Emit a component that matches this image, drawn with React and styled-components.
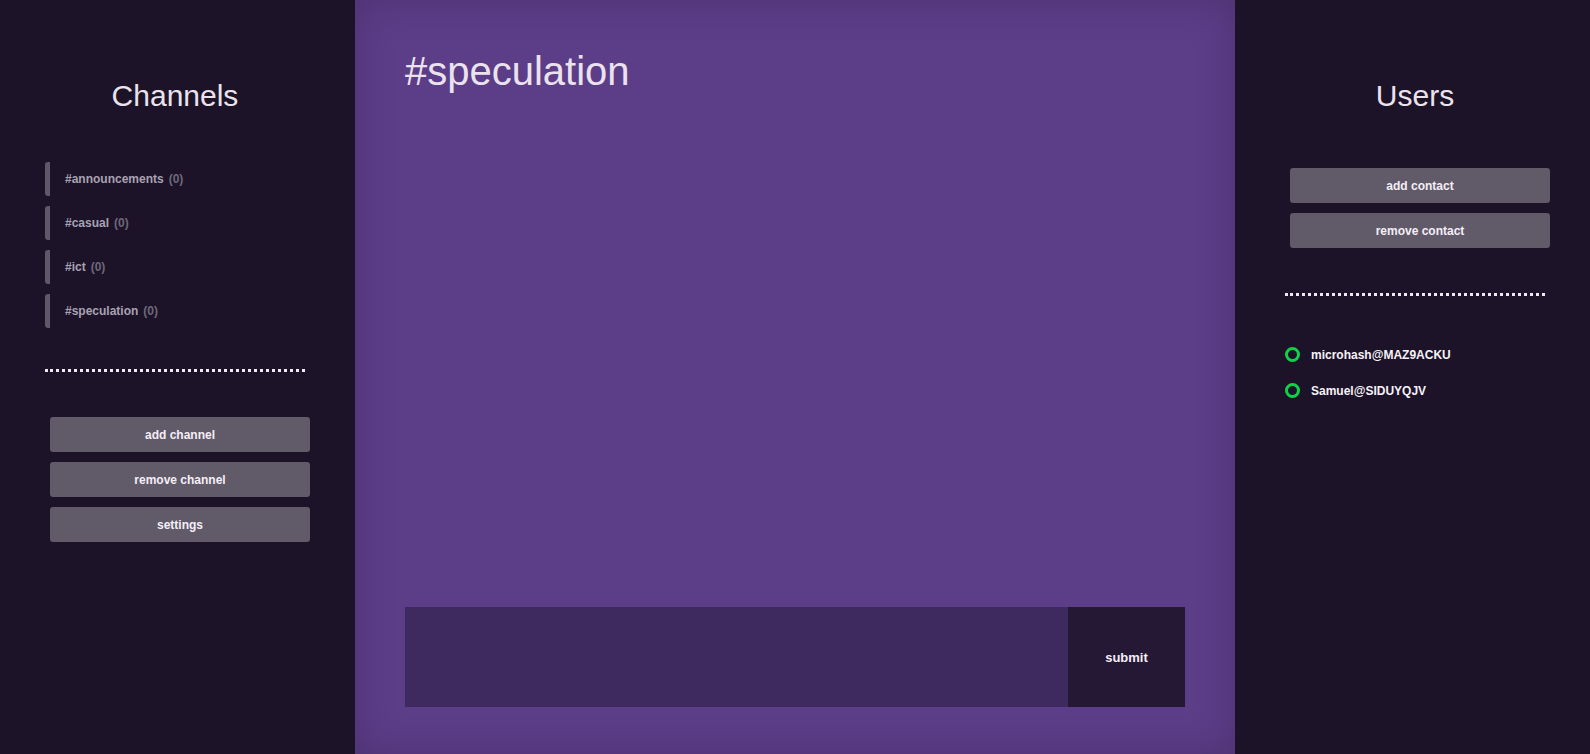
import styled, { createGlobalStyle } from 'styled-components';

const Global = createGlobalStyle`
  html, body {
    margin: 0;
    padding: 0;
    height: 100%;
    background: #1c1328;
  }
  #root { height: 100%; }
  * { box-sizing: border-box; }
`

const Layout = styled.div`
  display: grid;
  grid-template-columns: 355px 1fr 355px;
  height: 754px;
  font-family: 'Liberation Sans', Arial, sans-serif;
`

const Side = styled.aside`
  background: #1c1328;
  display: flex;
  flex-direction: column;
  padding: ${p => p.$right ? '0 45px 0 50px' : '0 50px 0 45px'};
`

const Heading = styled.h2`
  margin: 78px 0 0;
  font-size: 30px;
  font-weight: 400;
  line-height: 36px;
  color: #ebe3ec;
  text-align: center;
`

const ChannelList = styled.ul`
  list-style: none;
  margin: 48px 0 0;
  padding: 0;
  display: flex;
  flex-direction: column;
  gap: 10px;
`

const Channel = styled.li`
  height: 34px;
  display: flex;
  align-items: center;
  gap: 5px;
  padding-left: 15px;
  border-left: 5px solid #5f5868;
  border-radius: 3px;
  font-size: 12px;
  font-weight: 700;
  color: #a8a2b3;
  span { color: #6e687a; }
`

const Divider = styled.hr`
  border: 0;
  border-top: 3px dotted #f0eaf2;
  margin: ${p => p.$m};
  width: 260px;
`

const Buttons = styled.div`
  display: flex;
  flex-direction: column;
  gap: 10px;
  margin: ${p => p.$m};
`

const Button = styled.button`
  width: 260px;
  height: 35px;
  border: 0;
  border-radius: 3px;
  background: #615a69;
  color: #f4eef6;
  font-family: inherit;
  font-size: 12px;
  font-weight: 700;
  cursor: pointer;
`

const Main = styled.main`
  background: #5c3d88;
  box-shadow: inset 0 0 40px rgba(0, 0, 0, 0.18);
  display: flex;
  flex-direction: column;
  padding: 0 50px 47px;
`

const Title = styled.h1`
  margin: 48px 0 0;
  font-size: 40px;
  font-weight: 400;
  line-height: 46px;
  color: #ebe3ec;
`

const Messages = styled.div`
  flex: 1;
`

const Composer = styled.form`
  display: flex;
  height: 100px;
`

const Input = styled.textarea`
  flex: 1;
  border: 0;
  resize: none;
  background: #3f2a5f;
  color: #fff;
  outline: none;
`

const Submit = styled.button`
  width: 117px;
  border: 0;
  background: #251834;
  color: #f4eef6;
  font-family: inherit;
  font-size: 13px;
  font-weight: 700;
`

const UserList = styled.ul`
  list-style: none;
  margin: 51px 0 0;
  padding: 0;
  display: flex;
  flex-direction: column;
  gap: 21px;
`

const User = styled.li`
  display: flex;
  align-items: center;
  gap: 11px;
  height: 15px;
  font-size: 12px;
  font-weight: 700;
  color: #f7f2f8;
`

const Status = styled.i`
  width: 15px;
  height: 15px;
  border-radius: 50%;
  border: 3px solid ${p => p.$online ? '#0fd14a' : '#777'};
`

const channels = ['#announcements', '#casual', '#ict', '#speculation']
const users = ['microhash@MAZ9ACKU', 'Samuel@SIDUYQJV']

export default function App() {
  return (
    <>
      <Global />
      <Layout>
        <Side>
          <Heading>Channels</Heading>
          <ChannelList>
            {channels.map(c => (
              <Channel key={c}>{c} <span>(0)</span></Channel>
            ))}
          </ChannelList>
          <Divider $m="41px 0 0" />
          <Buttons $m="45px 0 0 5px">
            <Button>add channel</Button>
            <Button>remove channel</Button>
            <Button>settings</Button>
          </Buttons>
        </Side>
        <Main>
          <Title>#speculation</Title>
          <Messages />
          <Composer onSubmit={e => e.preventDefault()}>
            <Input />
            <Submit type="submit">submit</Submit>
          </Composer>
        </Main>
        <Side $right>
          <Heading>Users</Heading>
          <Buttons $m="54px 0 0 5px">
            <Button>add contact</Button>
            <Button>remove contact</Button>
          </Buttons>
          <Divider $m="45px 0 0" />
          <UserList>
            {users.map(u => (
              <User key={u}><Status $online />{u}</User>
            ))}
          </UserList>
        </Side>
      </Layout>
    </>
  )
}
